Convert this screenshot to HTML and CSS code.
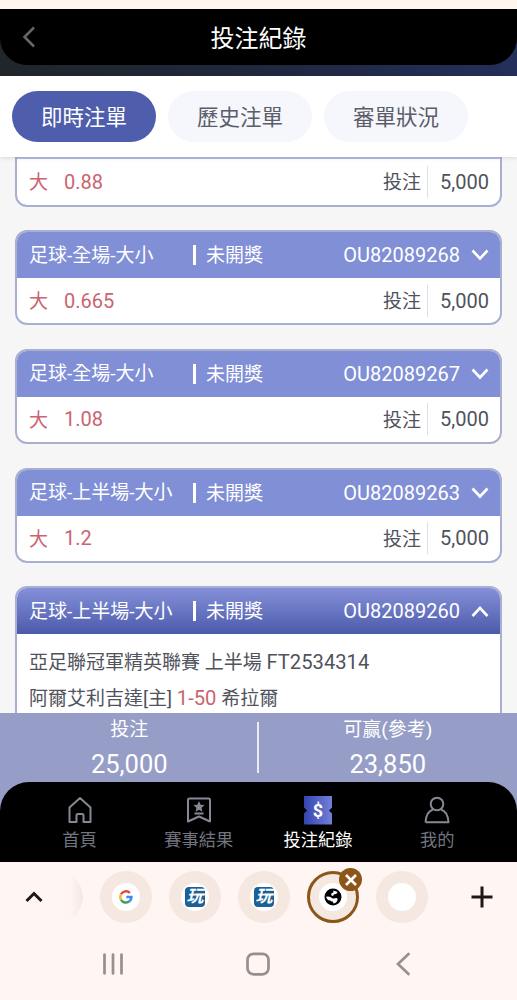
FILE: index.html
```html
<!DOCTYPE html>
<html lang="zh-Hant">
<head>
  <meta charset="UTF-8">
  <meta name="viewport" content="width=device-width, initial-scale=1.0">
  <title>投注紀錄</title>
  <link rel="stylesheet" href="styles.css">
</head>
<body>

  <div class="top-strip"></div>

  <div class="header-bg">
    <header class="header">
      <svg class="back" width="14" height="22" viewBox="0 0 14 22"><path d="M12 1.500 2.500 11 12 20.500"/></svg>
      <h1>投注紀錄</h1>
    </header>
  </div>

  <nav class="tabs">
    <button class="tab active">即時注單</button>
    <button class="tab">歷史注單</button>
    <button class="tab">審單狀況</button>
  </nav>

  <main class="list">
    <div class="card">
      <div class="card-head"></div>
      <div class="card-row">
        <span class="pick">大</span><span class="odds">0.88</span>
        <span class="label">投注</span><span class="amount">5,000</span>
      </div>
    </div>

    <div class="card">
      <div class="card-head">
        <span class="type">足球-全場-大小</span><span class="status">未開獎</span>
        <span class="order">OU82089268</span>
        <svg class="arrow" width="18" height="12" viewBox="0 0 18 12"><path d="M1.500 1.500 9 9.500 16.500 1.500"/></svg>
      </div>
      <div class="card-row">
        <span class="pick">大</span><span class="odds">0.665</span>
        <span class="label">投注</span><span class="amount">5,000</span>
      </div>
    </div>

    <div class="card">
      <div class="card-head">
        <span class="type">足球-全場-大小</span><span class="status">未開獎</span>
        <span class="order">OU82089267</span>
        <svg class="arrow" width="18" height="12" viewBox="0 0 18 12"><path d="M1.500 1.500 9 9.500 16.500 1.500"/></svg>
      </div>
      <div class="card-row">
        <span class="pick">大</span><span class="odds">1.08</span>
        <span class="label">投注</span><span class="amount">5,000</span>
      </div>
    </div>

    <div class="card">
      <div class="card-head">
        <span class="type">足球-上半場-大小</span><span class="status">未開獎</span>
        <span class="order">OU82089263</span>
        <svg class="arrow" width="18" height="12" viewBox="0 0 18 12"><path d="M1.500 1.500 9 9.500 16.500 1.500"/></svg>
      </div>
      <div class="card-row">
        <span class="pick">大</span><span class="odds">1.2</span>
        <span class="label">投注</span><span class="amount">5,000</span>
      </div>
    </div>

    <div class="card open">
      <div class="card-head">
        <span class="type">足球-上半場-大小</span><span class="status">未開獎</span>
        <span class="order">OU82089260</span>
        <svg class="arrow" width="18" height="12" viewBox="0 0 18 12"><path d="M1.500 11 9 3 16.500 11"/></svg>
      </div>
      <div class="detail">
        <p>亞足聯冠軍精英聯賽 上半場 <span class="num">FT2534314</span></p>
        <p>阿爾艾利吉達[主] <span class="num red">1-50</span> 希拉爾</p>
      </div>
    </div>
  </main>

  <section class="totals">
    <div class="total"><span>投注</span><b>25,000</b></div>
    <div class="total"><span>可赢(參考)</span><b>23,850</b></div>
  </section>

  <div class="menu-bg">
    <nav class="menu">
      <a class="menu-item">
        <svg width="30" height="30" viewBox="0 0 30 30"><path d="M4.500 12.500 15 3 25.500 12.500V27H18.500V20.500Q18.500 19 17 19H13Q11.500 19 11.500 20.500V27H4.500Z"/></svg>
        <span>首頁</span>
      </a>
      <a class="menu-item">
        <svg width="30" height="30" viewBox="0 0 30 30"><path d="M4 26.500V5Q4 3.500 5.500 3.500H24.500Q26 3.500 26 5V26.500L15 21.500Z"/><path class="solid" d="m15 6 1.600 3.700 3.900.4-2.900 2.700.8 3.900-3.400-2-3.400 2 .8-3.900-2.900-2.700 3.900-.4Z"/><path d="M10.500 18.500H19.500"/></svg>
        <span>賽事結果</span>
      </a>
      <a class="menu-item current">
        <svg width="30" height="30" viewBox="0 0 30 30">
          <defs>
            <linearGradient id="ticket" x1="0" x2="1" y1="0" y2="0"><stop offset="0" stop-color="#3545b0"/><stop offset="1" stop-color="#7380d6"/></linearGradient>
          </defs>
          <path class="ticket" d="M1 1H29V12.500L26 15.500 29 18.500V29.500H1V18.500L4 15.500 1 12.500Z"/>
          <text x="15" y="21.500">$</text>
        </svg>
        <span>投注紀錄</span>
      </a>
      <a class="menu-item">
        <svg width="30" height="30" viewBox="0 0 30 30"><circle cx="15" cy="9" r="6.300"/><path d="M3.500 27.300Q4 17 11 14.500M19 14.500Q26 17 26.500 27.300H3.500"/></svg>
        <span>我的</span>
      </a>
    </nav>
  </div>

  <footer class="browser">
    <div class="browser-tabs">
      <svg class="up" width="20" height="14" viewBox="0 0 20 14"><path d="M2.500 11 10 3.500 17.500 11"/></svg>
      <div class="bubbles">
        <div class="bubble-end"></div>
        <div class="bubble">
          <div class="disc">
            <svg width="14" height="14" viewBox="0 0 14 14" class="google"><path stroke="#e0453a" d="M2 4.300A5.500 5.500 0 0 1 10.900 3"/><path stroke="#f4b92a" d="M2 9.700A5.500 5.500 0 0 1 2 4.300"/><path stroke="#34a058" d="M10.500 11.200A5.500 5.500 0 0 1 2 9.700"/><path stroke="#4285f4" d="M7.300 7H12.500Q12.500 9.700 10.500 11.200"/></svg>
          </div>
        </div>
        <div class="bubble"><div class="disc"><span class="site">玩</span></div></div>
        <div class="bubble"><div class="disc"><span class="site">玩</span></div></div>
        <div class="bubble selected">
          <div class="disc">
            <svg width="18" height="18" viewBox="0 0 18 18"><circle cx="9" cy="9" r="8.500"/><path fill="#fff" d="M2 8.800Q4.500 7.800 7 9.300 8.200 11.300 11 10.200 13.500 9.500 13.600 11.500 13 14.800 9.500 15.600L8.800 13.500Q6.800 13.800 6.200 12.300 3.500 13 2 8.800ZM9.500 2.500 13.600 4 12.200 6 10 6.200 9 8 7.200 7.200 7.500 5.200 9.200 4.800Z"/></svg>
          </div>
          <div class="close"><svg width="12" height="12" viewBox="0 0 12 12"><path d="M1 1 11 11M11 1 1 11"/></svg></div>
        </div>
        <div class="bubble"><div class="disc"></div></div>
      </div>
      <svg class="plus" width="22" height="22" viewBox="0 0 22 22"><path d="M11 .5V21.500M.5 11H21.500"/></svg>
    </div>
    <div class="system">
      <svg width="24" height="24" viewBox="0 0 24 24"><path d="M3.500 2.500V21.500M12 2.500V21.500M20.500 2.500V21.500"/></svg>
      <svg width="24" height="24" viewBox="0 0 24 24"><rect x="1.500" y="1.800" width="21" height="20.500" rx="6"/></svg>
      <svg width="24" height="24" viewBox="0 0 24 24"><path d="M17.500 2 7 12 17.500 22"/></svg>
    </div>
  </footer>

</body>
</html>
```

FILE: styles.css
```css
* {
  box-sizing: border-box;
}
body {
  margin: 0;
  height: 1000px;
  display: flex;
  flex-direction: column;
  overflow: hidden;
  font-family: Roboto, "Noto Sans CJK TC", sans-serif;
  font-size: 19px;
  color: #50525c;
  background: #f6f6f6;
}
svg {
  fill: none;
  flex: none;
}
.top-strip {
  height: 9px;
  background: #fff6f0;
}

/* Header */
.header-bg {
  height: 67px;
  background: linear-gradient(90deg, #20262a, #1f2940 55%, #242f5b);
}
.header {
  height: 56px;
  display: flex;
  align-items: center;
  padding: 0 22px;
  background: #000;
  border-radius: 0 0 27px 27px;
}
.header h1 {
  flex: 1;
  margin: 0 14px 2px 0;
  text-align: center;
  font-size: 24px;
  font-weight: 400;
  color: #fff;
}
.back {
  stroke: #66666a;
  stroke-width: 2.5;
}

/* Tabs */
.tabs {
  height: 81px;
  flex: none;
  display: flex;
  gap: 12px;
  padding: 15px 12px;
  background: #fff;
  box-shadow: 0 1px 4px rgba(0, 0, 0, 0.12);
  position: relative;
}
.tab {
  width: 144px;
  height: 51px;
  padding: 0 0 2px;
  border: none;
  border-radius: 26px;
  background: #f6f7fc;
  color: #5b5d69;
  font-family: inherit;
  font-size: 21.5px;
}
.tab.active {
  background: #4e5dac;
  color: #fff;
}

/* Bet list */
.list {
  height: 556px;
  flex: none;
  overflow: hidden;
  padding: 0 15px;
}
.card {
  height: 95.25px;
  margin-bottom: 23.5px;
  border: 2px solid #a9afd2;
  border-radius: 12px;
  background: #fff;
  overflow: hidden;
}
.card:first-child {
  margin-top: -45.75px;
}
.card:first-child .card-head {
  background: #b3bce4;
}
.card-head {
  height: 46px;
  display: flex;
  align-items: center;
  padding: 0 11px 0 12px;
  background: #808fd6;
  color: #fff;
}
.type {
  width: 164px;
  margin-bottom: 4px;
}
.status {
  height: 20px;
  padding-left: 10px;
  line-height: 22px;
  border-left: 3px solid #fff;
}
.order {
  margin-left: auto;
  font-size: 20px;
}
.arrow {
  margin-left: 11px;
  stroke: #fff;
  stroke-width: 2.6;
}
.card-row {
  height: 45px;
  display: flex;
  align-items: center;
  padding: 0 11px 0 12px;
}
.pick, .odds, .red {
  color: #ca6470;
}
.pick, .label {
  margin-bottom: 2px;
}
.odds {
  margin-left: 16px;
  font-size: 20px;
}
.label {
  margin-left: auto;
}
.amount {
  margin-left: 6px;
  padding-left: 12px;
  border-left: 1px solid #dedfe6;
  font-size: 20px;
  line-height: 32px;
}
.num {
  font-size: 20.2px;
}
.open {
  height: 200px;
}
.open .card-head {
  background: linear-gradient(#8490d8, #4c5aab);
}
.detail {
  padding: 11px 12px;
}
.detail p {
  margin: 0;
  line-height: 34.5px;
  white-space: nowrap;
}

/* Totals */
.totals {
  height: 69px;
  flex: none;
  display: flex;
  background: #969dc6;
  color: #fff;
}
.total {
  flex: 1;
  display: flex;
  flex-direction: column;
  align-items: center;
  position: relative;
}
.total span {
  line-height: 34px;
}
.total b {
  font-size: 25.5px;
  font-weight: 400;
  line-height: 34px;
}
.total:first-child::after {
  content: "";
  position: absolute;
  right: 0;
  top: 9px;
  width: 2px;
  height: 51px;
  background: #e9ebf7;
}

/* Bottom menu */
.menu-bg {
  flex: none;
  background: #969dc6;
}
.menu {
  height: 80px;
  display: flex;
  padding: 13px 20px 0;
  background: #000;
  border-radius: 29px 29px 0 0;
}
.menu-item {
  flex: 1;
  display: flex;
  flex-direction: column;
  align-items: center;
  color: #72757f;
  font-size: 17.25px;
  line-height: 30px;
}
.menu-item svg {
  stroke: #858895;
  stroke-width: 2;
  stroke-linejoin: round;
}
.menu-item .solid {
  fill: #858895;
  stroke: none;
}
.menu-item .ticket {
  fill: url(#ticket);
  stroke: none;
}
.menu-item text {
  fill: #fff;
  stroke: none;
  font-size: 18px;
  font-weight: 700;
  text-anchor: middle;
}
.menu-item.current {
  color: #fff;
}

/* Browser tabs and system buttons */
.browser {
  height: 138px;
  background: #fff5f2;
}
.browser-tabs {
  height: 70px;
  display: flex;
  align-items: center;
}
.up {
  margin-left: 24px;
  stroke: #1d1816;
  stroke-width: 3;
}
.bubbles {
  width: 400px;
  margin-left: 26px;
  display: flex;
  gap: 17px;
}
.bubble {
  width: 52px;
  height: 52px;
  flex: none;
  display: flex;
  align-items: center;
  justify-content: center;
  border-radius: 50%;
  background: #f4e8e1;
  position: relative;
}
/* Tab scrolled out on the left, only its edge shows */
.bubble-end {
  width: 13px;
  height: 52px;
  flex: none;
  background: radial-gradient(circle at -13px 26px, transparent 25.5px, #fff5f2 26px), linear-gradient(90deg, #fff5f2, #f4e8e1);
}
.disc {
  width: 28px;
  height: 28px;
  flex: none;
  display: flex;
  align-items: center;
  justify-content: center;
  border-radius: 50%;
  background: #fff;
}
.google {
  stroke-width: 2.4;
}
.site {
  width: 20px;
  height: 20px;
  border-radius: 4px;
  background: #1c6096;
  color: #fff;
  font-size: 17px;
  font-style: italic;
  font-weight: 700;
  line-height: 18px;
  text-align: center;
}
.selected {
  border: 3px solid #8c5618;
}
.selected circle {
  fill: #000;
}
.close {
  position: absolute;
  top: -6px;
  right: -6px;
  width: 23px;
  height: 23px;
  display: flex;
  align-items: center;
  justify-content: center;
  border-radius: 50%;
  background: #8c5618;
}
.close path {
  stroke: #fff;
  stroke-width: 2.6;
}
.plus {
  margin-left: 1px;
  stroke: #1d1816;
  stroke-width: 3;
}
.system {
  height: 64px;
  display: flex;
  justify-content: space-between;
  align-items: center;
  padding: 0 102px 0 101px;
}
.system svg {
  stroke: #96908e;
  stroke-width: 2.7;
  stroke-linecap: round;
}
```
